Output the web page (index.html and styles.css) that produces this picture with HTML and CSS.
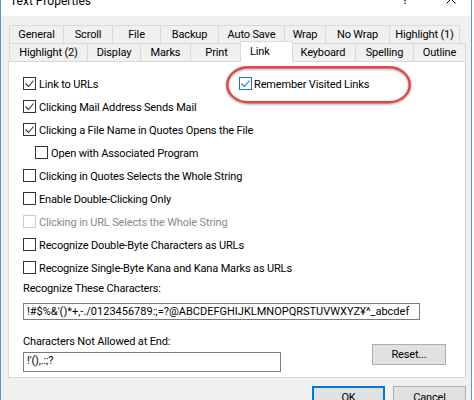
FILE: index.html
```html
<!DOCTYPE html>
<html>
<head>
<meta charset="utf-8">
<title>Text Properties</title>
<link rel="stylesheet" href="styles.css">
</head>
<body>
<div class="window">
  <div class="titlebar">
    <span class="title">Text Properties</span>
    <span class="help">?</span>
    <svg class="close" width="10" height="10" viewBox="0 0 10 10"><path d="M0.5 0.5 L9.5 9.5 M9.5 0.5 L0.5 9.5" stroke="#000" stroke-width="1" fill="none"/></svg>
  </div>
  <div class="dialog">
    <div class="tabs">
      <div class="tabrow">
        <div class="tab w-general">General</div>
        <div class="tab w-scroll">Scroll</div>
        <div class="tab w-file">File</div>
        <div class="tab w-backup">Backup</div>
        <div class="tab w-autosave">Auto Save</div>
        <div class="tab w-wrap">Wrap</div>
        <div class="tab w-nowrap">No Wrap</div>
        <div class="tab w-hl1">Highlight (1)</div>
      </div>
      <div class="tabrow">
        <div class="tab w-hl2">Highlight (2)</div>
        <div class="tab w-display">Display</div>
        <div class="tab w-marks">Marks</div>
        <div class="tab w-print">Print</div>
        <div class="tab sel w-link">Link</div>
        <div class="tab w-keyboard">Keyboard</div>
        <div class="tab w-spelling">Spelling</div>
        <div class="tab w-outline">Outline</div>
      </div>
    </div>
    <div class="panel">
      <svg class="ring" width="190" height="42" viewBox="0 0 190 42"><rect x="3.25" y="3.25" width="182.5" height="35" rx="21" ry="17.5" fill="none" stroke="#e2474a" stroke-width="2.4"/></svg>
      <div class="opts">
        <div class="opt-row split">
          <div class="cb"><span class="box"><svg width="11" height="11" viewBox="0 0 11 11"><polyline points="1.5,5.5 4.5,8.5 9.5,2.5" fill="none" stroke="#333" stroke-width="1.1"/></svg></span><span class="txt">Link to URLs</span></div>
          <div class="cb hot"><span class="box"><svg width="11" height="11" viewBox="0 0 11 11"><polyline points="1.5,5.5 4.5,8.5 9.5,2.5" fill="none" stroke="#1a73d0" stroke-width="1.1"/></svg></span><span class="txt">Remember Visited Links</span></div>
        </div>
        <div class="opt-row">
          <div class="cb"><span class="box"><svg width="11" height="11" viewBox="0 0 11 11"><polyline points="1.5,5.5 4.5,8.5 9.5,2.5" fill="none" stroke="#333" stroke-width="1.1"/></svg></span><span class="txt">Clicking Mail Address Sends Mail</span></div>
        </div>
        <div class="opt-row">
          <div class="cb"><span class="box"><svg width="11" height="11" viewBox="0 0 11 11"><polyline points="1.5,5.5 4.5,8.5 9.5,2.5" fill="none" stroke="#333" stroke-width="1.1"/></svg></span><span class="txt">Clicking a File Name in Quotes Opens the File</span></div>
        </div>
        <div class="opt-row indent">
          <div class="cb"><span class="box"></span><span class="txt">Open with Associated Program</span></div>
        </div>
        <div class="opt-row">
          <div class="cb"><span class="box"></span><span class="txt">Clicking in Quotes Selects the Whole String</span></div>
        </div>
        <div class="opt-row">
          <div class="cb"><span class="box"></span><span class="txt">Enable Double-Clicking Only</span></div>
        </div>
        <div class="opt-row">
          <div class="cb disabled"><span class="box"></span><span class="txt">Clicking in URL Selects the Whole String</span></div>
        </div>
        <div class="opt-row">
          <div class="cb"><span class="box"></span><span class="txt">Recognize Double-Byte Characters as URLs</span></div>
        </div>
        <div class="opt-row">
          <div class="cb"><span class="box"></span><span class="txt">Recognize Single-Byte Kana and Kana Marks as URLs</span></div>
        </div>
      </div>
      <div class="lbl first">Recognize These Characters:</div>
      <div class="input wide">!#$%&amp;'()*+,-./0123456789:;=?@ABCDEFGHIJKLMNOPQRSTUVWXYZ¥^_abcdef</div>
      <div class="bottom-row">
        <div class="field">
          <div class="lbl second">Characters Not Allowed at End:</div>
          <div class="input narrow">!'(),.:;?</div>
        </div>
        <div class="btn reset">Reset...</div>
      </div>
    </div>
    <div class="buttons">
      <div class="btn ok">OK</div>
      <div class="btn cancel">Cancel</div>
    </div>
  </div>
</div>
</body>
</html>
```

FILE: styles.css
```css
html, body {
  margin: 0;
  padding: 0;
  background: #ffffff;
}

body {
  font-family: Roboto, "Liberation Sans", sans-serif;
  font-size: 11px;
  letter-spacing: -0.15px;
  color: #000;
}

.window {
  width: 472px;
  height: 400px;
  box-sizing: border-box;
  border-left: 1px solid #4a9ae0;
  border-right: 1px solid #4a9ae0;
  background: #f0f0f0;
  overflow: hidden;
}

.titlebar {
  height: 16px;
  background: #ffffff;
  display: flex;
  align-items: flex-start;
  overflow: hidden;
  padding-left: 9px;
}

.title {
  font-size: 12px;
  line-height: 16px;
  margin-top: -7px;
  letter-spacing: 0;
  color: #000;
}

.help {
  margin-left: auto;
  font-size: 13px;
  line-height: 16px;
  margin-top: -8px;
}

.close {
  margin-left: 38px;
  margin-right: 15px;
  margin-top: -6px;
}

.dialog {
  display: flex;
  flex-direction: column;
}

.tabs {
  padding-top: 9px;
  padding-left: 8px;
}

.tabrow {
  display: flex;
  align-items: flex-start;
}

.tab {
  box-sizing: border-box;
  height: 18px;
  border: 1px solid #d9d9d9;
  border-bottom: none;
  margin-left: -1px;
  text-align: center;
  line-height: 17px;
  white-space: nowrap;
  background: #f0f0f0;
}

.tab:first-child {
  margin-left: 0;
}

.tab.sel {
  position: relative;
  z-index: 2;
  background: #ffffff;
  height: 21px;
  margin-top: -2px;
  margin-bottom: -1px;
  margin-left: -3px;
  margin-right: -2px;
  line-height: 17px;
  padding-top: 1px;
  text-align: left;
  padding-left: 9px;
}

.w-general { width: 55px; }
.w-scroll { width: 50px; }
.w-file { width: 49px; }
.w-backup { width: 59px; }
.w-autosave { width: 67px; }
.w-wrap { width: 42px; }
.w-nowrap { width: 65px; }
.w-hl1 { width: 71px; }

.w-hl2 { width: 79px; }
.w-display { width: 54px; }
.w-marks { width: 51px; }
.w-print { width: 53px; }
.w-link { width: 53px; }
.w-keyboard { width: 66px; }
.w-spelling { width: 59px; }
.w-outline { width: 53px; }

.panel {
  position: relative;
  z-index: 1;
  box-sizing: border-box;
  margin-left: 7px;
  width: 458px;
  height: 317px;
  background: #ffffff;
  border: 1px solid #d9d9d9;
  padding: 10px 19px 0 14px;
}

.ring {
  position: absolute;
  left: 215px;
  top: 2px;
  filter: drop-shadow(0.5px 1px 0.8px rgba(0, 0, 0, 0.35));
}

.opts {
  display: flex;
  flex-direction: column;
}

.opt-row {
  height: 23px;
  display: flex;
  align-items: center;
}

.opt-row.split {
  display: grid;
  grid-template-columns: 216px auto;
  align-items: center;
}

.opt-row.indent {
  padding-left: 12px;
}

.cb {
  display: flex;
  align-items: center;
  white-space: nowrap;
}

.box {
  box-sizing: border-box;
  width: 13px;
  height: 13px;
  border: 1px solid #333333;
  background: #ffffff;
  margin-right: 3px;
  display: flex;
}

.box svg {
  display: block;
}

.txt {
  line-height: 15px;
  padding-top: 2px;
}

.cb.hot .box {
  border-color: #1a73d0;
  margin-right: 2px;
}

.cb.disabled .box {
  border-color: #cccccc;
}

.cb.disabled .txt {
  color: #8a8a8a;
}

.lbl {
  line-height: 15px;
}

.lbl.first {
  margin-top: 2px;
}

.lbl.second {
  margin-top: 14px;
}

.input {
  box-sizing: border-box;
  border: 1px solid #7a7a7a;
  background: #ffffff;
  padding-left: 3px;
  white-space: nowrap;
  overflow: hidden;
  line-height: 15px;
}

.input.wide {
  width: 397px;
  height: 17px;
  margin-top: 7px;
  letter-spacing: 0;
}

.input.narrow {
  width: 258px;
  height: 20px;
  margin-top: 3px;
}

.bottom-row {
  display: flex;
  justify-content: space-between;
  align-items: flex-start;
}

.btn {
  box-sizing: border-box;
  background: #e1e1e1;
  border: 1px solid #adadad;
  display: flex;
  align-items: center;
  justify-content: center;
  white-space: nowrap;
}

.reset {
  width: 74px;
  height: 21px;
  margin-top: 24px;
}

.buttons {
  display: flex;
  justify-content: flex-end;
  gap: 8px;
  padding-right: 5px;
  margin-top: 8px;
}

.ok, .cancel {
  width: 73px;
  height: 23px;
}

.ok {
  border: 2px solid #0078d7;
}
```
